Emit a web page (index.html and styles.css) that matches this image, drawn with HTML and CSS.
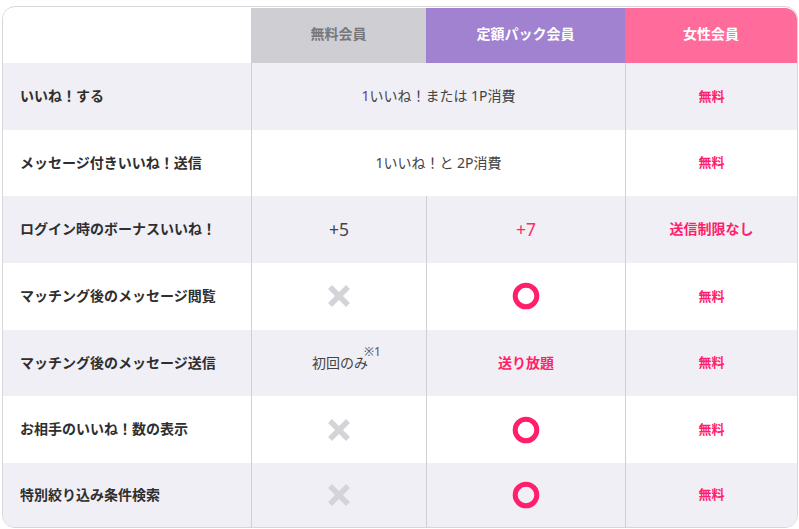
FILE: index.html
```html
<!DOCTYPE html>
<html lang="ja">
<head>
<meta charset="utf-8">
<link rel="stylesheet" href="styles.css">
</head>
<body>
<div class="table">
  <div class="hcell hblank"></div>
  <div class="hcell hfree">無料会員</div>
  <div class="hcell hpack">定額パック会員</div>
  <div class="hcell hfemale">女性会員</div>

  <div class="cell label odd">いいね！する</div>
  <div class="cell val odd span2"><span class="one">1</span>いいね！または 1P消費</div>
  <div class="cell val odd pinkb">無料</div>

  <div class="cell label">メッセージ付きいいね！送信</div>
  <div class="cell val span2">1いいね！と 2P消費</div>
  <div class="cell val pinkb">無料</div>

  <div class="cell label odd">ログイン時のボーナスいいね！</div>
  <div class="cell val odd big">+5</div>
  <div class="cell val odd big pink">+7</div>
  <div class="cell val odd pinkb big14">送信制限なし</div>

  <div class="cell label">マッチング後のメッセージ閲覧</div>
  <div class="cell val"><svg class="icon cross" viewBox="0 0 24 24"><path d="M3 3 L21 21 M21 3 L3 21" stroke="#d3d3d8" stroke-width="5.5"/></svg></div>
  <div class="cell val"><svg class="icon" viewBox="0 0 28 28"><circle cx="14" cy="14" r="10.8" fill="none" stroke="#ff1f6a" stroke-width="5"/></svg></div>
  <div class="cell val pinkb">無料</div>

  <div class="cell label odd">マッチング後のメッセージ送信</div>
  <div class="cell val odd"><span class="first">初回のみ<sup class="note">※1</sup></span></div>
  <div class="cell val odd pinkb big14">送り放題</div>
  <div class="cell val odd pinkb">無料</div>

  <div class="cell label">お相手のいいね！数の表示</div>
  <div class="cell val"><svg class="icon cross" viewBox="0 0 24 24"><path d="M3 3 L21 21 M21 3 L3 21" stroke="#d3d3d8" stroke-width="5.5"/></svg></div>
  <div class="cell val"><svg class="icon" viewBox="0 0 28 28"><circle cx="14" cy="14" r="10.8" fill="none" stroke="#ff1f6a" stroke-width="5"/></svg></div>
  <div class="cell val pinkb">無料</div>

  <div class="cell label odd">特別絞り込み条件検索</div>
  <div class="cell val odd"><svg class="icon cross" viewBox="0 0 24 24"><path d="M3 3 L21 21 M21 3 L3 21" stroke="#d3d3d8" stroke-width="5.5"/></svg></div>
  <div class="cell val odd"><svg class="icon" viewBox="0 0 28 28"><circle cx="14" cy="14" r="10.8" fill="none" stroke="#ff1f6a" stroke-width="5"/></svg></div>
  <div class="cell val odd pinkb">無料</div>
</div>
</body>
</html>
```
FILE: styles.css
```css
html, body {
  margin: 0;
  padding: 0;
  background: #ffffff;
}
body {
  font-family: "Noto Sans", "Noto Sans CJK JP", sans-serif;
  color: #333;
}
.table {
  margin: 6px 1px 0 2px;
  border: 1px solid #d6d6db;
  border-radius: 13px;
  padding-top: 1px;
  overflow: hidden;
  display: grid;
  grid-template-columns: 248px 175px 199px 172px;
  grid-template-rows: 55px repeat(6, 66.67px) 64px;
  background: #fff;
}
.hcell {
  display: flex;
  align-items: center;
  justify-content: center;
  font-size: 14px;
  font-weight: 700;
  color: #fff;
  line-height: 1.2;
  padding-bottom: 2px;
}
.hblank { background: #fff; }
.hfree { background: #cfced3; color: #77767b; }
.hpack { background: #a082d0; }
.hfemale { background: #ff6b9b; border-top-right-radius: 12px; }
.cell {
  display: flex;
  align-items: center;
  background: #fff;
  font-size: 14px;
  line-height: 1.2;
}
.cell.odd { background: #f0eff5; }
.label {
  padding-left: 17px;
  font-weight: 700;
  color: #2e2e2e;
}
.val {
  justify-content: center;
  color: #444;
  border-left: 1px solid #cfcfd4;
}
.span2 { grid-column: span 2; }
.one { color: #6c3a8c; }
.big { font-size: 17.5px; }
.pink { color: #ff2a68; }
.pinkb { color: #ff1f6a; font-weight: 700; font-size: 13px; }
.pinkb.big14 { font-size: 14px; }
.first {
  position: relative;
  margin-left: 2px;
}
.note {
  position: absolute;
  left: calc(100% - 4px);
  top: -9px;
  font-size: 12px;
  line-height: 1;
  color: #555;
}
.icon {
  width: 28px;
  height: 28px;
}
.icon.cross {
  width: 24px;
  height: 24px;
}
```
